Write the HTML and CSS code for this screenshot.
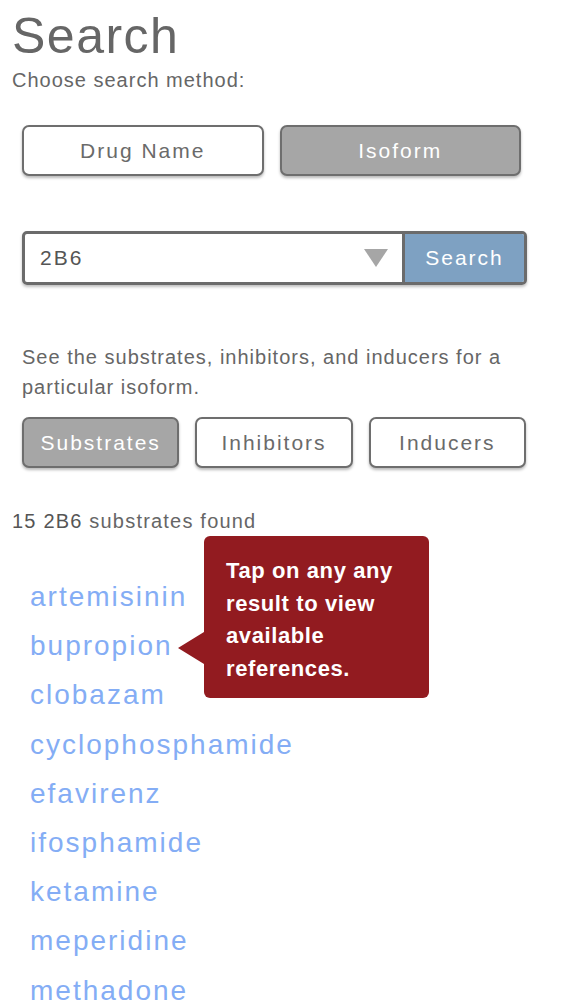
FILE: index.html
```html
<!DOCTYPE html>
<html>
<head>
<meta charset="utf-8">
<link rel="stylesheet" href="styles.css">
</head>
<body>
<div class="page">
  <h1 class="title">Search</h1>
  <p class="subtitle">Choose search method:</p>
  <div class="method-row">
    <button class="btn">Drug Name</button>
    <button class="btn active">Isoform</button>
  </div>
  <div class="search-row">
    <div class="select">
      <span class="select-value">2B6</span>
      <svg class="caret" width="24" height="18" viewBox="0 0 24 18"><polygon points="0,0 24,0 12,18" fill="#a6a6a6"/></svg>
    </div>
    <button class="search-btn">Search</button>
  </div>
  <p class="desc">See the substrates, inhibitors, and inducers for a particular isoform.</p>
  <div class="filter-row">
    <button class="btn active">Substrates</button>
    <button class="btn">Inhibitors</button>
    <button class="btn">Inducers</button>
  </div>
  <p class="count"><span class="count-strong">15 2B6</span> substrates found</p>
  <div class="results">
    <ul class="list">
      <li>artemisinin</li>
      <li>bupropion</li>
      <li>clobazam</li>
      <li>cyclophosphamide</li>
      <li>efavirenz</li>
      <li>ifosphamide</li>
      <li>ketamine</li>
      <li>meperidine</li>
      <li>methadone</li>
    </ul>
    <div class="tooltip">Tap on any any result to view available references.</div>
  </div>
</div>
</body>
</html>
```
FILE: styles.css
```css
html, body {
  margin: 0;
  padding: 0;
  background: #fff;
}
body {
  font-family: "Liberation Sans", Arial, sans-serif;
  color: #666;
  overflow: hidden;
}
.page {
  padding: 0 12px;
}
.title {
  margin: 0;
  padding-top: 10px;
  font-size: 50px;
  line-height: 52px;
  font-weight: normal;
  letter-spacing: 1.5px;
  color: #666;
}
.subtitle {
  margin: 6px 0 0;
  font-size: 20px;
  line-height: 24px;
  letter-spacing: 1px;
  color: #666;
}
.method-row {
  display: flex;
  gap: 16px;
  margin: 33px 0 0 10px;
  width: 499px;
}
.btn {
  flex: 1;
  height: 51px;
  border: 2px solid #6e6e6e;
  border-radius: 7px;
  background: #fff;
  color: #6a6a6a;
  font-family: "Liberation Sans", Arial, sans-serif;
  font-size: 21px;
  letter-spacing: 2px;
  box-shadow: 0 2px 3px rgba(0, 0, 0, 0.28);
  padding: 0;
}
.btn.active {
  background: #a6a6a6;
  color: #fff;
}
.search-row {
  display: flex;
  margin: 55px 0 0 10px;
  width: 505px;
  height: 54px;
  border: 3px solid #6b6b6b;
  border-radius: 5px;
  box-sizing: border-box;
  box-shadow: 0 2px 3px rgba(0, 0, 0, 0.25);
  overflow: hidden;
}
.select {
  flex: 1;
  display: flex;
  align-items: center;
  justify-content: space-between;
  padding: 0 14px 0 15px;
  border-right: 3px solid #6b6b6b;
}
.select-value {
  font-size: 21px;
  letter-spacing: 2px;
  color: #555;
}
.caret {
  display: block;
}
.search-btn {
  width: 119px;
  border: none;
  background: #7ea1c2;
  color: #fff;
  font-family: "Liberation Sans", Arial, sans-serif;
  font-size: 21px;
  letter-spacing: 2px;
  padding: 0;
}
.desc {
  margin: 57px 0 0 10px;
  font-size: 20px;
  line-height: 30px;
  letter-spacing: 1px;
  color: #666;
  width: 510px;
}
.filter-row {
  display: flex;
  gap: 16px;
  margin: 15px 0 0 10px;
  width: 504px;
}
.count {
  margin: 41px 0 0;
  font-size: 20px;
  line-height: 24px;
  letter-spacing: 1.2px;
  color: #666;
}
.count-strong {
  color: #555;
}
.results {
  position: relative;
}
.list {
  list-style: none;
  margin: 0;
  padding: 39px 0 0 18px;
}
.list li {
  font-size: 28px;
  line-height: 49.2px;
  letter-spacing: 2px;
  color: #84adf5;
}
.tooltip {
  position: absolute;
  left: 192px;
  top: 3px;
  width: 225px;
  box-sizing: border-box;
  padding: 19px 16px 13px 22px;
  background: #921b20;
  border-radius: 6px;
  color: #fff;
  font-size: 22px;
  line-height: 32.5px;
  font-weight: bold;
  letter-spacing: 0.6px;
}
.tooltip::before {
  content: "";
  position: absolute;
  left: -26px;
  top: 96px;
  border-style: solid;
  border-width: 16px 26px 16px 0;
  border-color: transparent #921b20 transparent transparent;
}
```
